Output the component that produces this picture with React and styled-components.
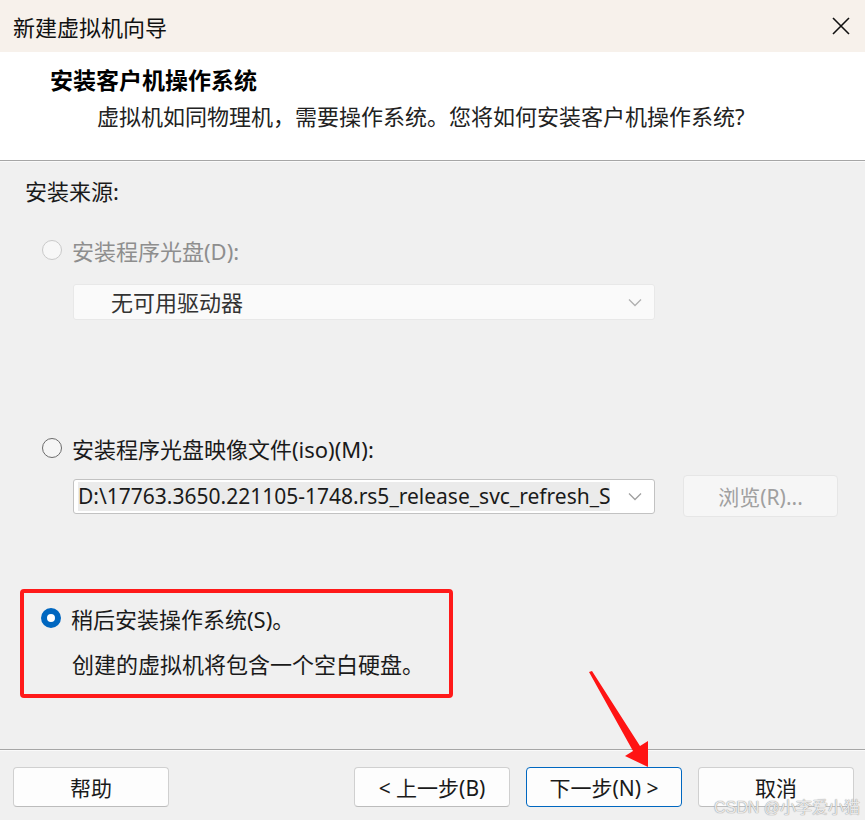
import React from 'react'
import styled, { createGlobalStyle } from 'styled-components'

const GlobalStyle = createGlobalStyle`
  html, body {
    margin: 0;
    padding: 0;
    background: #f0f0f0;
  }
  body {
    font-family: "Noto Sans", "Noto Sans CJK SC", sans-serif;
    color: #1a1a1a;
  }
`

const Window = styled.div`
  position: relative;
  width: 865px;
  height: 820px;
  display: flex;
  flex-direction: column;
  background: #f0f0f0;
  overflow: hidden;
`

const TitleBar = styled.div`
  height: 52px;
  flex: none;
  box-sizing: border-box;
  display: flex;
  align-items: center;
  justify-content: space-between;
  padding: 0 14px 0 13px;
  background: #f7f1eb;
  font-size: 22px;
  color: #111;
`

const Header = styled.div`
  height: 109px;
  flex: none;
  background: #fff;
  border-bottom: 1px solid #a6a6a6;
  box-shadow: 0 1px 0 #fafafa;
  padding: 13px 0 0 50px;
  box-sizing: border-box;
`

const Heading = styled.div`
  font-size: 23px;
  font-weight: 700;
  line-height: 30px;
  color: #000;
`

const SubHeading = styled.div`
  margin: 6px 0 0 47px;
  font-size: 22px;
  line-height: 30px;
  color: #222;
`

const Body = styled.div`
  flex: 1;
  padding: 16px 0 0 25px;
  display: flex;
  flex-direction: column;
  align-items: flex-start;
`

const Label = styled.div`
  font-size: 22px;
  line-height: 28px;
  color: ${p => (p.disabled ? '#8e8e8e' : '#1a1a1a')};
  margin-top: ${p => p.top || 0}px;
  margin-left: ${p => p.indent || 0}px;
`

const RadioRow = styled.div`
  display: flex;
  align-items: center;
  gap: 10px;
  height: 28px;
  margin-top: ${p => p.top || 0}px;
  margin-left: ${p => p.indent ?? 17}px;
  font-size: 22px;
  color: ${p => (p.disabled ? '#8e8e8e' : '#1a1a1a')};
`

const Radio = styled.span`
  width: 20px;
  height: 20px;
  box-sizing: border-box;
  border-radius: 50%;
  flex: none;
  background: ${p => (p.checked ? '#fff' : p.disabled ? '#f7f7f7' : '#f5f5f5')};
  border: ${p =>
    p.checked ? '6px solid #0067c0' : p.disabled ? '1.5px solid #c9c9c9' : '1.5px solid #6b6b6b'};
`

const FieldRow = styled.div`
  display: flex;
  align-items: center;
  gap: 28px;
  margin-top: ${p => p.top || 0}px;
  margin-left: 48px;
`

const Select = styled.div`
  width: 582px;
  height: ${p => (p.disabled ? 36 : 35)}px;
  box-sizing: border-box;
  display: flex;
  align-items: center;
  justify-content: space-between;
  margin-top: ${p => p.top || 0}px;
  margin-left: ${p => p.indent || 0}px;
  padding: ${p => (p.disabled ? '0 12px 0 37px' : '0 12px 0 4px')};
  background: ${p => (p.disabled ? '#fafafa' : '#fff')};
  border: 1px solid ${p => (p.disabled ? '#e8e8e8' : '#c2c2c2')};
  border-radius: 3px;
  font-size: ${p => (p.disabled ? 22 : 21)}px;
  color: ${p => (p.disabled ? '#333' : '#1a1a1a')};
`

const SelectText = styled.span`
  flex: 1;
  overflow: hidden;
  white-space: nowrap;
  line-height: 29px;
  background: ${p => (p.selected ? '#ebebeb' : 'transparent')};
  margin-right: 18px;
`

const Chevron = styled.svg`
  flex: none;
  width: 14px;
  height: 9px;
`

const BrowseButton = styled.div`
  width: 155px;
  height: 42px;
  box-sizing: border-box;
  display: flex;
  align-items: center;
  justify-content: center;
  background: #f6f6f6;
  border: 1px solid #e6e6e6;
  border-radius: 4px;
  font-size: 21px;
  color: #a0a0a0;
`

const Highlight = styled.div`
  margin: 72px 0 0 -5px;
  width: 433px;
  height: 109px;
  box-sizing: border-box;
  border: 4px solid #ff1a1a;
  border-radius: 4px;
  padding: 11px 0 0 0;
`

const Footer = styled.div`
  height: 71px;
  flex: none;
  box-sizing: border-box;
  border-top: 1px solid #a6a6a6;
  box-shadow: inset 0 1px 0 #fafafa;
  display: flex;
  align-items: flex-start;
  padding: 17px 11px 0 13px;
  gap: 16px;
`

const Button = styled.div`
  width: 156px;
  height: 40px;
  box-sizing: border-box;
  display: flex;
  align-items: center;
  justify-content: center;
  background: #fdfdfd;
  border: 1px solid ${p => (p.primary ? '#0067c0' : '#d0d0d0')};
  border-bottom-color: ${p => (p.primary ? '#0067c0' : '#bcbcbc')};
  border-radius: 4px;
  font-size: 21px;
  color: #1a1a1a;
  margin-left: ${p => p.push || 0}px;
`

const Watermark = styled.div`
  position: absolute;
  right: 5px;
  bottom: 2px;
  font-family: "Liberation Sans", "Noto Sans CJK SC", sans-serif;
  font-size: 16px;
  color: rgba(255, 255, 255, 0.8);
  text-shadow: 0 0 1px #999, 0 0 1px #999;
`

const Arrow = styled.svg`
  position: absolute;
  left: 0;
  top: 0;
  width: 865px;
  height: 820px;
  pointer-events: none;
`

const ChevronIcon = ({ color }) => (
  <Chevron viewBox="0 0 14 9">
    <path d="M1 1.5 L7 7.5 L13 1.5" fill="none" stroke={color} strokeWidth="1.3" />
  </Chevron>
)

export default function App() {
  return (
    <Window>
      <GlobalStyle />
      <TitleBar>
        <span>新建虚拟机向导</span>
        <svg width="20" height="20" viewBox="0 0 20 20">
          <path d="M2 2 L18 18 M18 2 L2 18" stroke="#111" strokeWidth="1.6" />
        </svg>
      </TitleBar>
      <Header>
        <Heading>安装客户机操作系统</Heading>
        <SubHeading>虚拟机如同物理机，需要操作系统。您将如何安装客户机操作系统?</SubHeading>
      </Header>
      <Body>
        <Label>安装来源:</Label>
        <RadioRow top={31} disabled>
          <Radio disabled />
          <span>安装程序光盘(D):</span>
        </RadioRow>
        <Select disabled top={20} indent={48}>
          <SelectText>无可用驱动器</SelectText>
          <ChevronIcon color="#b0b0b0" />
        </Select>
        <RadioRow top={114}>
          <Radio />
          <span>安装程序光盘映像文件(iso)(M):</span>
        </RadioRow>
        <FieldRow top={13}>
          <Select>
            <SelectText selected>D:\17763.3650.221105-1748.rs5_release_svc_refresh_S</SelectText>
            <ChevronIcon color="#a0a0a0" />
          </Select>
          <BrowseButton>浏览(R)...</BrowseButton>
        </FieldRow>
        <Highlight>
          <RadioRow>
            <Radio checked />
            <span>稍后安装操作系统(S)。</span>
          </RadioRow>
          <Label top={18} indent={48}>创建的虚拟机将包含一个空白硬盘。</Label>
        </Highlight>
      </Body>
      <Footer>
        <Button>帮助</Button>
        <Button push={169}>&lt; 上一步(B)</Button>
        <Button primary>下一步(N) &gt;</Button>
        <Button>取消</Button>
      </Footer>
      <Arrow viewBox="0 0 865 820">
        <polygon points="589,672 592,671 640,746 648,741 648,767 625,756 633,751" fill="#ff1414" />
      </Arrow>
      <Watermark>CSDN @小李爱小猫</Watermark>
    </Window>
  )
}
